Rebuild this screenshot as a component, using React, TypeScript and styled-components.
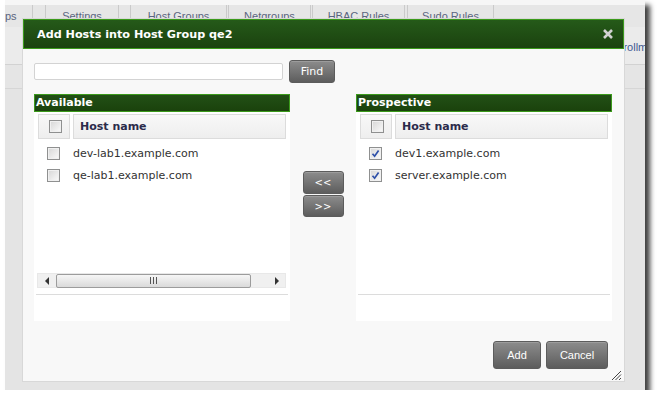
import React from 'react';
import styled, { createGlobalStyle } from 'styled-components';

const Global = createGlobalStyle`
  html, body { margin: 0; padding: 0; background: #ffffff; }
  body { font-family: "DejaVu Sans", Verdana, sans-serif; }
  * { box-sizing: border-box; }
`;

const Frame = styled.div`
  position: relative;
  margin-left: 5px;
  width: 640px;
  height: 390px;
  background: #e4e4e4;
  box-shadow: 5px 5px 5px rgba(0, 0, 0, 0.75);
  overflow: hidden;
  display: flex;
  flex-direction: column;
`;

const TopStrip = styled.div`
  height: 5px;
  background: #f6f6f6;
  flex: none;
`;

const TabBar = styled.div`
  display: flex;
  height: 22px;
  background: #e6e6e6;
  flex: none;
`;

const Tab = styled.div<{ $w: number; $ml: number; $noLeft?: boolean }>`
  width: ${(p) => p.$w}px;
  margin-left: ${(p) => p.$ml}px;
  border-left: ${(p) => (p.$noLeft ? 'none' : '1px solid #cacaca')};
  border-right: 1px solid #cacaca;
  font-family: "Liberation Sans", Arial, sans-serif;
  font-size: 11px;
  line-height: 22px;
  color: #5a6580;
  text-align: ${(p) => (p.$noLeft ? 'left' : 'center')};
  white-space: nowrap;
  overflow: hidden;
`;

const HeadRow = styled.div`
  height: 38px;
  background: #ebebeb;
  border-bottom: 1px solid #d2d2d2;
  flex: none;
  display: flex;
  align-items: center;
  padding-left: 605px;
  padding-top: 2px;
`;

const LinkText = styled.span`
  font-family: "Liberation Sans", Arial, sans-serif;
  font-size: 11px;
  color: #3f5a92;
  white-space: nowrap;
`;

const SubRow = styled.div`
  height: 24px;
  background: #e5e5e5;
  border-bottom: 1px solid #d6d6d6;
  flex: none;
`;

const Dialog = styled.div`
  position: absolute;
  left: 17px;
  top: 18px;
  width: 603px;
  height: 364px;
  background: #f8f8f8;
  border: 1px solid #d8d8d8;
  display: flex;
  flex-direction: column;
`;

const TitleBar = styled.div`
  height: 30px;
  flex: none;
  border: 1px solid #3b9a1b;
  background: linear-gradient(#255a19, #1b420f);
  display: flex;
  align-items: center;
  justify-content: space-between;
  padding: 0 9px 0 13px;
`;

const Title = styled.span`
  color: #ffffff;
  font-weight: bold;
  font-size: 11.2px;
`;

const CloseBtn = styled.span`
  display: flex;
  width: 12px;
  height: 12px;
`;

const Body = styled.div`
  flex: 1;
  display: flex;
  flex-direction: column;
  padding: 11px 12px 13px 11px;
`;

const SearchRow = styled.div`
  display: flex;
  align-items: center;
  gap: 6px;
  height: 23px;
`;

const SearchInput = styled.div`
  width: 249px;
  height: 17px;
  background: #ffffff;
  border: 1px solid #d3d3d3;
  border-radius: 2px;
`;

const Button = styled.button<{ $w: number; $h: number; $font?: string; $size?: number }>`
  width: ${(p) => p.$w}px;
  height: ${(p) => p.$h}px;
  padding: 0;
  border: 1px solid #5c5c5c;
  border-radius: 3px;
  background: linear-gradient(#8c8c8c, #5d5d5d);
  color: #ffffff;
  font-family: ${(p) => p.$font || '"DejaVu Sans", Verdana, sans-serif'};
  font-size: ${(p) => p.$size || 11}px;
  display: flex;
  align-items: center;
  justify-content: center;
  box-shadow: inset 0 1px 0 rgba(255, 255, 255, 0.15);
`;

const Panels = styled.div`
  margin-top: 11px;
  height: 227px;
  display: flex;
`;

const Panel = styled.div`
  width: 256px;
  display: flex;
  flex-direction: column;
`;

const PanelHeader = styled.div`
  height: 18px;
  flex: none;
  border: 1px solid #3b9a1b;
  background: linear-gradient(#225016, #1a420c);
  color: #ffffff;
  font-weight: bold;
  font-size: 11px;
  line-height: 16px;
  padding-left: 1px;
`;

const PanelBody = styled.div`
  flex: 1;
  background: #ffffff;
  display: flex;
  flex-direction: column;
`;

const TableArea = styled.div`
  flex: 1;
  padding: 2px 4px 0 4px;
  display: flex;
  flex-direction: column;
`;

const HeaderRow = styled.div`
  display: grid;
  grid-template-columns: 32px 1fr;
  gap: 3px;
  height: 25px;
  margin-bottom: 3px;
`;

const HeadCell = styled.div<{ $center?: boolean }>`
  border: 1px solid #dcdcdc;
  background: linear-gradient(#f8f8f8, #eeeeee);
  display: flex;
  align-items: center;
  justify-content: ${(p) => (p.$center ? 'center' : 'flex-start')};
  padding-left: ${(p) => (p.$center ? '2px' : '6px')};
  font-weight: bold;
  font-size: 11px;
  color: #2b2b4a;
`;

const DataRow = styled.div`
  display: grid;
  grid-template-columns: 32px 1fr;
  gap: 3px;
  height: 22px;
  align-items: center;
`;

const CheckCell = styled.div`
  display: flex;
  justify-content: center;
  padding-right: 1px;
`;

const HostText = styled.span`
  font-size: 11px;
  color: #333333;
`;

const Box = styled.span`
  display: inline-flex;
  width: 13px;
  height: 13px;
  border: 1px solid #8f9090;
  background: linear-gradient(135deg, #d6d6d6, #fbfbfb);
  box-shadow: inset 0 0 0 1px #f0f0f0;
  align-items: center;
  justify-content: center;
`;

const ScrollBar = styled.div`
  height: 15px;
  margin: 0 4px 0 3px;
  background: #f0f0f0;
  border: 1px solid #e8e8e8;
  display: flex;
  align-items: center;
  flex: none;
`;

const ScrollArrow = styled.div`
  width: 18px;
  height: 13px;
  display: flex;
  align-items: center;
  justify-content: center;
`;

const Thumb = styled.div`
  width: 195px;
  height: 14px;
  border: 1px solid #9c9c9c;
  border-radius: 2px;
  background: linear-gradient(#f6f6f6, #dadada);
  display: flex;
  align-items: center;
  justify-content: center;
`;

const Track = styled.div`
  flex: 1;
`;

const Divider = styled.div<{ $top: number }>`
  margin: ${(p) => p.$top}px 2px 0 2px;
  height: 1px;
  background: #dcdcdc;
  flex: none;
`;

const PanelFooter = styled.div`
  height: 26px;
  flex: none;
`;

const MoveColumn = styled.div`
  flex: 1;
  display: flex;
  flex-direction: column;
  align-items: center;
  padding-top: 77px;
  gap: 1px;
`;

const Footer = styled.div`
  margin-top: 20px;
  margin-right: 4px;
  display: flex;
  justify-content: flex-end;
  gap: 5px;
  position: relative;
`;

const Grip = styled.div`
  position: absolute;
  right: -14px;
  bottom: -12px;
  width: 11px;
  height: 11px;
  display: flex;
`;

const Check = ({ checked }: { checked?: boolean }) => (
  <Box>
    {checked && (
      <svg width="9" height="9" viewBox="0 0 9 9">
        <path d="M1.5 4.8 L3.6 7.2 L7.6 1.5" fill="none" stroke="#2d4fa8" strokeWidth="1.7" />
      </svg>
    )}
  </Box>
);

type Host = { name: string; checked?: boolean };

const HostPanel = ({ title, hosts, scroll }: { title: string; hosts: Host[]; scroll?: boolean }) => (
  <Panel>
    <PanelHeader>{title}</PanelHeader>
    <PanelBody>
      <TableArea>
        <HeaderRow>
          <HeadCell $center>
            <Check />
          </HeadCell>
          <HeadCell>Host name</HeadCell>
        </HeaderRow>
        {hosts.map((h) => (
          <DataRow key={h.name}>
            <CheckCell>
              <Check checked={h.checked} />
            </CheckCell>
            <HostText>{h.name}</HostText>
          </DataRow>
        ))}
      </TableArea>
      {scroll && (
        <ScrollBar>
          <ScrollArrow>
            <svg width="5" height="8" viewBox="0 0 5 8">
              <path d="M4 0 L0 4 L4 8 Z" fill="#333" />
            </svg>
          </ScrollArrow>
          <Thumb>
            <svg width="7" height="7" viewBox="0 0 7 7">
              <path d="M0.5 0 V7 M3.5 0 V7 M6.5 0 V7" stroke="#555" strokeWidth="1" />
            </svg>
          </Thumb>
          <Track />
          <ScrollArrow>
            <svg width="5" height="8" viewBox="0 0 5 8">
              <path d="M1 0 L5 4 L1 8 Z" fill="#333" />
            </svg>
          </ScrollArrow>
        </ScrollBar>
      )}
      <Divider $top={scroll ? 6 : 0} />
      <PanelFooter />
    </PanelBody>
  </Panel>
);

export default function App() {
  return (
    <>
      <Global />
      <Frame>
        <TopStrip />
        <TabBar>
          <Tab $w={28} $ml={0} $noLeft>ps</Tab>
          <Tab $w={74} $ml={12}>Settings</Tab>
          <Tab $w={97} $ml={11}>Host Groups</Tab>
          <Tab $w={83} $ml={1}>Netgroups</Tab>
          <Tab $w={93} $ml={1}>HBAC Rules</Tab>
          <Tab $w={87} $ml={2}>Sudo Rules</Tab>
        </TabBar>
        <HeadRow>
          <LinkText>Enrollment</LinkText>
        </HeadRow>
        <SubRow />
        <Dialog>
          <TitleBar>
            <Title>Add Hosts into Host Group qe2</Title>
            <CloseBtn>
              <svg width="12" height="12" viewBox="0 0 12 12">
                <path d="M2 2 L10 10 M10 2 L2 10" stroke="#d2d2d2" strokeWidth="2.6" />
              </svg>
            </CloseBtn>
          </TitleBar>
          <Body>
            <SearchRow>
              <SearchInput />
              <Button $w={46} $h={23}>Find</Button>
            </SearchRow>
            <Panels>
              <HostPanel
                title="Available"
                scroll
                hosts={[{ name: 'dev-lab1.example.com' }, { name: 'qe-lab1.example.com' }]}
              />
              <MoveColumn>
                <Button $w={41} $h={23} $size={10}>&lt;&lt;</Button>
                <Button $w={41} $h={22} $size={10}>&gt;&gt;</Button>
              </MoveColumn>
              <HostPanel
                title="Prospective"
                hosts={[
                  { name: 'dev1.example.com', checked: true },
                  { name: 'server.example.com', checked: true },
                ]}
              />
            </Panels>
            <Footer>
              <Button $w={48} $h={28} $font={'"Liberation Sans", Arial, sans-serif'}>Add</Button>
              <Button $w={62} $h={28} $font={'"Liberation Sans", Arial, sans-serif'}>Cancel</Button>
              <Grip>
                <svg width="11" height="11" viewBox="0 0 11 11">
                  <path d="M1 10 L10 1 M4.5 10 L10 4.5 M8 10 L10 8" stroke="#444" strokeWidth="1" />
                </svg>
              </Grip>
            </Footer>
          </Body>
        </Dialog>
      </Frame>
    </>
  );
}
